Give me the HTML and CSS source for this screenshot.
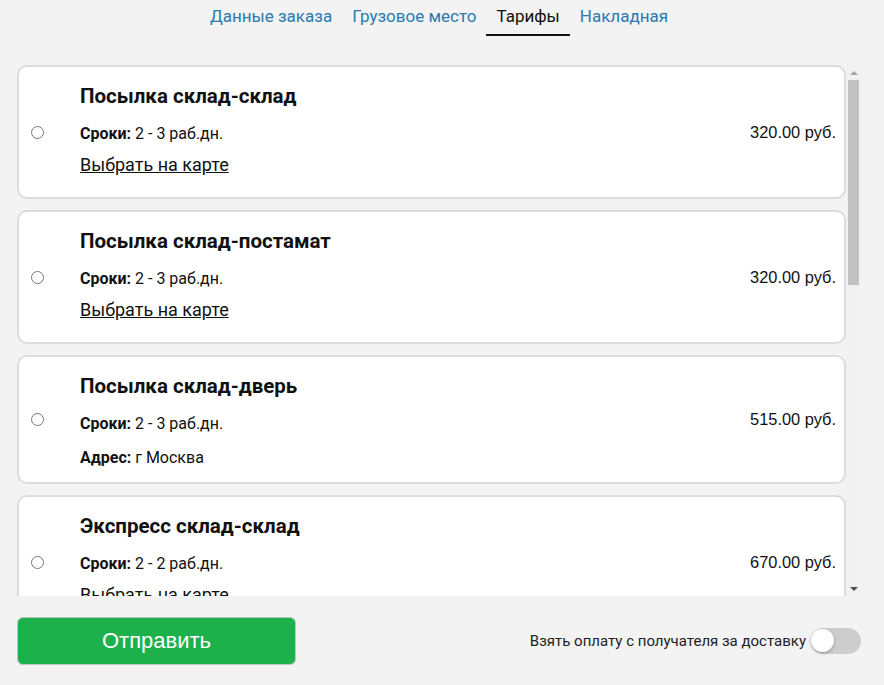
FILE: index.html
```html
<!DOCTYPE html>
<html lang="ru">
<head>
<meta charset="utf-8">
<title>Тарифы</title>
<link rel="stylesheet" href="styles.css">
</head>
<body>
<div class="page">
  <nav class="tabs">
    <a class="tab">Данные заказа</a>
    <a class="tab">Грузовое место</a>
    <a class="tab active">Тарифы</a>
    <a class="tab">Накладная</a>
  </nav>

  <div class="list-wrap">
  <div class="list">
    <label class="card">
      <span class="radio-col"><input type="radio" name="tariff"></span>
      <span class="info">
        <span class="title">Посылка склад-склад</span>
        <span class="line"><b>Сроки:</b> 2 - 3 раб.дн.</span>
        <span class="link">Выбрать на карте</span>
      </span>
      <span class="price">320.00 руб.</span>
    </label>

    <label class="card">
      <span class="radio-col"><input type="radio" name="tariff"></span>
      <span class="info">
        <span class="title">Посылка склад-постамат</span>
        <span class="line"><b>Сроки:</b> 2 - 3 раб.дн.</span>
        <span class="link">Выбрать на карте</span>
      </span>
      <span class="price">320.00 руб.</span>
    </label>

    <label class="card">
      <span class="radio-col"><input type="radio" name="tariff"></span>
      <span class="info">
        <span class="title">Посылка склад-дверь</span>
        <span class="line"><b>Сроки:</b> 2 - 3 раб.дн.</span>
        <span class="line addr"><b>Адрес:</b> г Москва</span>
      </span>
      <span class="price">515.00 руб.</span>
    </label>

    <label class="card">
      <span class="radio-col"><input type="radio" name="tariff"></span>
      <span class="info">
        <span class="title">Экспресс склад-склад</span>
        <span class="line"><b>Сроки:</b> 2 - 2 раб.дн.</span>
        <span class="link">Выбрать на карте</span>
      </span>
      <span class="price">670.00 руб.</span>
    </label>

    <label class="card">
      <span class="radio-col"><input type="radio" name="tariff"></span>
      <span class="info">
        <span class="title">Экспресс склад-постамат</span>
        <span class="line"><b>Сроки:</b> 2 - 2 раб.дн.</span>
        <span class="link">Выбрать на карте</span>
      </span>
      <span class="price">670.00 руб.</span>
    </label>

    <label class="card">
      <span class="radio-col"><input type="radio" name="tariff"></span>
      <span class="info">
        <span class="title">Экспресс склад-дверь</span>
        <span class="line"><b>Сроки:</b> 2 - 2 раб.дн.</span>
        <span class="line addr"><b>Адрес:</b> г Москва</span>
      </span>
      <span class="price">865.00 руб.</span>
    </label>
  </div>
  <div class="scrollbar" aria-hidden="true">
    <span class="sb-btn sb-up"></span>
    <span class="sb-track"><span class="sb-thumb"></span></span>
    <span class="sb-btn sb-down"></span>
  </div>
  </div>

  <footer class="footer">
    <button class="send" type="button">Отправить</button>
    <div class="pay">
      <span class="pay-label">Взять оплату с получателя за доставку</span>
      <span class="switch"><span class="knob"></span></span>
    </div>
  </footer>
</div>
</body>
</html>
```

FILE: styles.css
```css
html, body {
  margin: 0;
  padding: 0;
  background: #f3f3f3;
  font-family: Roboto, "Noto Sans", sans-serif;
  color: #111;
}

.page {
  margin: 0 23px 0 17px;
}

.tabs {
  display: flex;
  justify-content: center;
  height: 36px;
  margin-bottom: 29px;
}

.tab {
  display: block;
  padding: 5px 10px 7px;
  line-height: 22px;
  font-size: 17px;
  color: #2a7ab0;
  border-bottom: 2px solid transparent;
  cursor: pointer;
}

.tab.active {
  color: #111;
  border-bottom-color: #111;
}

.list-wrap {
  display: flex;
  height: 531px;
}

.list {
  flex: 1;
  overflow: hidden;
}

.scrollbar {
  flex: none;
  width: 15px;
  background: #f1f1f1;
  display: flex;
  flex-direction: column;
}

.sb-btn {
  flex: none;
  height: 15px;
  display: flex;
  align-items: center;
  justify-content: center;
}

.sb-up::before,
.sb-down::before {
  content: "";
  width: 0;
  height: 0;
  border-left: 4px solid transparent;
  border-right: 4px solid transparent;
}

.sb-up::before {
  border-bottom: 4px solid #a3a3a3;
}

.sb-down::before {
  border-top: 4px solid #505050;
}

.sb-track {
  flex: 1;
  padding: 0 2px;
}

.sb-thumb {
  display: block;
  height: 205px;
  background: #c1c1c1;
}

.card {
  display: flex;
  align-items: center;
  background: #fff;
  border: 2px solid #dcdcdc;
  border-radius: 10px;
  margin-bottom: 11px;
}

.radio-col {
  width: 61px;
  flex: none;
  display: flex;
}

.radio-col input {
  margin: 0 0 0 12px;
  width: 13px;
  height: 13px;
}

.info {
  flex: 1;
  display: flex;
  flex-direction: column;
  padding: 17px 0 14px;
}

.title {
  font-size: 20.5px;
  line-height: 24px;
  font-weight: 700;
  color: #111;
  margin-bottom: 16px;
}

.line {
  font-size: 16px;
  line-height: 20px;
  color: #111;
}

.line b {
  font-weight: 700;
}

.addr {
  margin-top: 14px;
}

.link {
  font-size: 18px;
  line-height: 20px;
  text-decoration: underline;
  color: #111;
  margin: 11px 0 8px;
}

.price {
  flex: none;
  padding-right: 8px;
  font-family: "Liberation Sans", Arial, sans-serif;
  font-size: 16.4px;
  color: #111;
}

.footer {
  display: flex;
  align-items: center;
  justify-content: space-between;
  padding-top: 21px;
}

.send {
  width: 279px;
  height: 48px;
  background: #1db14b;
  border: 1px solid #b9c9bd;
  border-radius: 6px;
  color: #fff;
  font-family: "Liberation Sans", Arial, sans-serif;
  font-size: 22px;
  cursor: pointer;
}

.pay {
  display: flex;
  align-items: center;
  gap: 5px;
}

.pay-label {
  font-size: 15px;
  color: #222;
}

.switch {
  position: relative;
  width: 50px;
  height: 26px;
  border-radius: 13px;
  background: #cdcdcd;
}

.knob {
  position: absolute;
  left: 0;
  top: 1px;
  width: 23px;
  height: 23px;
  border-radius: 50%;
  background: #fff;
  box-shadow: 0 1px 3px rgba(0, 0, 0, 0.35);
}
```
